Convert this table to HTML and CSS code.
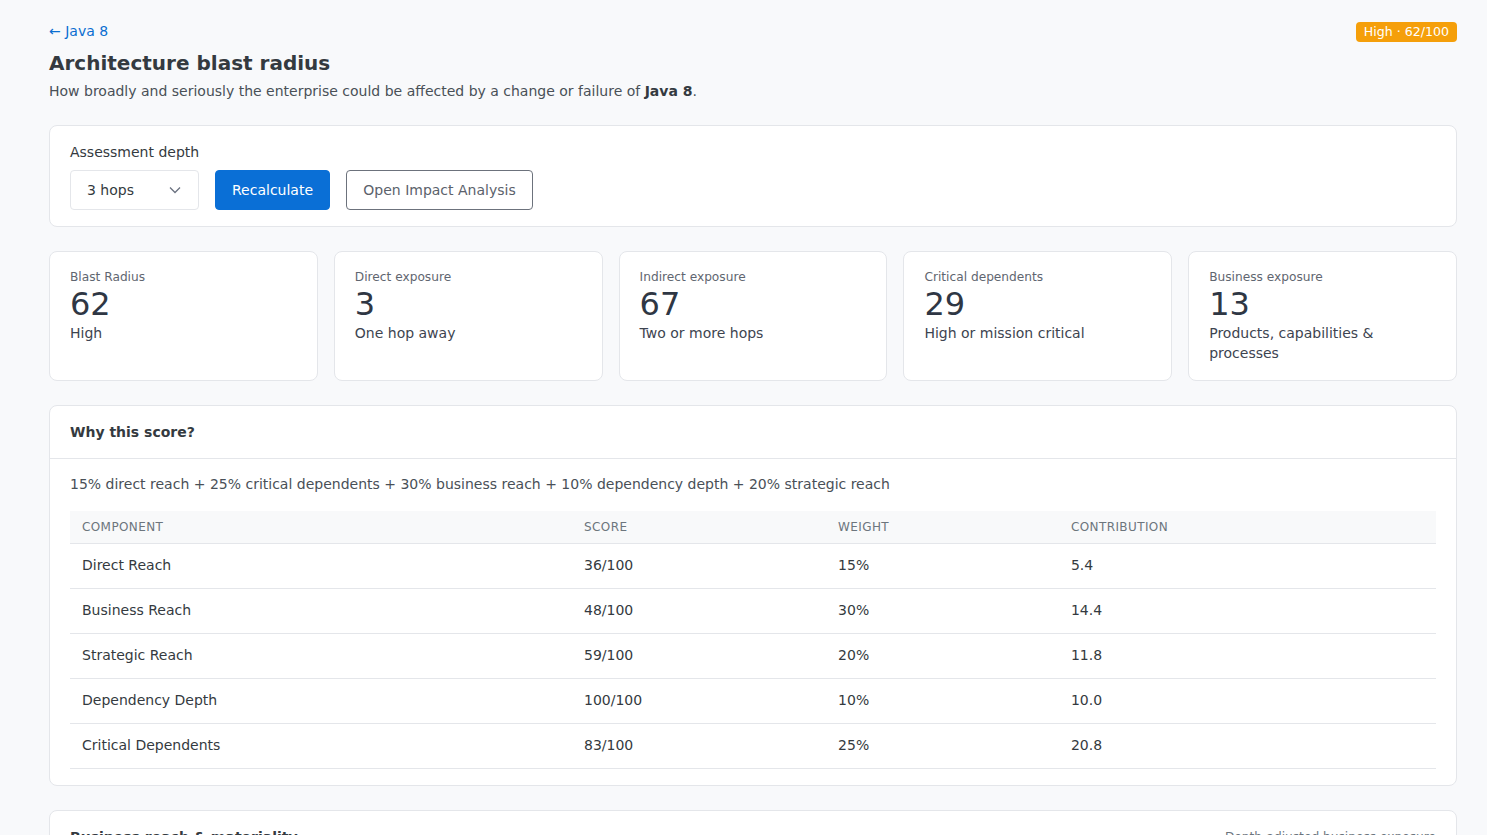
FILE: index.html
```html
<!DOCTYPE html>
<html lang="en">
<head>
<meta charset="utf-8">
<title>Architecture blast radius</title>
<link rel="stylesheet" href="styles.css">
</head>
<body>
<main class="page">
  <div class="topbar">
    <a class="back" href="#">← Java 8</a>
    <span class="badge">High · 62/100</span>
  </div>
  <h1 class="title">Architecture blast radius</h1>
  <p class="subtitle">How broadly and seriously the enterprise could be affected by a change or failure of <strong>Java 8</strong>.</p>

  <section class="card controls">
    <label class="ctl-label">Assessment depth</label>
    <div class="ctl-row">
      <div class="select">
        <span>3 hops</span>
        <svg class="chev" width="12" height="8" viewBox="0 0 12 8"><path d="M1 1.5 L6 6.5 L11 1.5" fill="none" stroke="#6b7280" stroke-width="1.3"/></svg>
      </div>
      <button class="btn btn-primary">Recalculate</button>
      <button class="btn btn-outline">Open Impact Analysis</button>
    </div>
  </section>

  <section class="stats">
    <div class="card stat">
      <div class="stat-label">Blast Radius</div>
      <div class="stat-value">62</div>
      <div class="stat-sub">High</div>
    </div>
    <div class="card stat">
      <div class="stat-label">Direct exposure</div>
      <div class="stat-value">3</div>
      <div class="stat-sub">One hop away</div>
    </div>
    <div class="card stat">
      <div class="stat-label">Indirect exposure</div>
      <div class="stat-value">67</div>
      <div class="stat-sub">Two or more hops</div>
    </div>
    <div class="card stat">
      <div class="stat-label">Critical dependents</div>
      <div class="stat-value">29</div>
      <div class="stat-sub">High or mission critical</div>
    </div>
    <div class="card stat">
      <div class="stat-label">Business exposure</div>
      <div class="stat-value">13</div>
      <div class="stat-sub">Products, capabilities &amp; processes</div>
    </div>
  </section>

  <section class="card panel">
    <header class="panel-head">
      <h2 class="panel-title">Why this score?</h2>
    </header>
    <div class="panel-body">
      <p class="formula">15% direct reach + 25% critical dependents + 30% business reach + 10% dependency depth + 20% strategic reach</p>
      <table class="score-table">
        <colgroup>
          <col class="c1"><col class="c2"><col class="c3"><col class="c4">
        </colgroup>
        <thead>
          <tr><th>Component</th><th>Score</th><th>Weight</th><th>Contribution</th></tr>
        </thead>
        <tbody>
          <tr><td>Direct Reach</td><td>36/100</td><td>15%</td><td>5.4</td></tr>
          <tr><td>Business Reach</td><td>48/100</td><td>30%</td><td>14.4</td></tr>
          <tr><td>Strategic Reach</td><td>59/100</td><td>20%</td><td>11.8</td></tr>
          <tr><td>Dependency Depth</td><td>100/100</td><td>10%</td><td>10.0</td></tr>
          <tr><td>Critical Dependents</td><td>83/100</td><td>25%</td><td>20.8</td></tr>
        </tbody>
      </table>
    </div>
  </section>

  <section class="card panel">
    <header class="panel-head split">
      <h2 class="panel-title">Business reach &amp; materiality</h2>
      <span class="panel-meta">Depth-adjusted business exposure</span>
    </header>
    <div class="panel-body tall"></div>
  </section>
</main>
</body>
</html>
```

FILE: styles.css
```css
* { box-sizing: border-box; }
html, body {
  margin: 0;
  padding: 0;
  background: #f8f9fb;
  font-family: "DejaVu Sans", sans-serif;
  color: #343a40;
}
.page {
  padding: 20px 30px 0 49px;
}
.topbar {
  display: flex;
  justify-content: space-between;
  align-items: center;
  height: 22px;
}
.back {
  color: #0b6fd1;
  text-decoration: none;
  font-size: 14px;
}
.badge {
  background: #f59f0a;
  color: #fff;
  font-size: 12.6px;
  padding: 2px 8px;
  border-radius: 4px;
  line-height: 16px;
  margin-top: 1px;
}
.title {
  font-size: 20px;
  font-weight: bold;
  margin: 8px 0 0;
  line-height: 26px;
  color: #343a40;
}
.subtitle {
  margin: 5px 0 0;
  font-size: 14px;
  line-height: 20px;
  color: #495057;
}
.subtitle strong { color: #343a40; }

.card {
  background: #fff;
  border: 1px solid #e4e6ea;
  border-radius: 8px;
}
.controls {
  margin-top: 24px;
  padding: 17px 20px 16px;
}
.ctl-label {
  display: block;
  font-size: 14px;
  line-height: 18px;
  color: #343a40;
}
.ctl-row {
  display: flex;
  gap: 16px;
  margin-top: 9px;
}
.select {
  width: 129px;
  height: 40px;
  border: 1px solid #e4e6ea;
  border-radius: 4px;
  display: flex;
  align-items: center;
  justify-content: space-between;
  padding: 0 17px 0 16px;
  font-size: 14px;
  color: #343a40;
}
.btn {
  height: 40px;
  font-family: inherit;
  font-size: 14px;
  border-radius: 4px;
  padding: 0 16px;
  cursor: pointer;
}
.btn-primary {
  background: #0a6fd6;
  border: 1px solid #0a6fd6;
  color: #fff;
  width: 115px;
}
.btn-outline {
  background: #fff;
  border: 1px solid #6c727c;
  color: #5b626b;
  width: 187px;
}

.stats {
  margin-top: 24px;
  display: grid;
  grid-template-columns: repeat(5, 1fr);
  gap: 16px;
}
.stat {
  height: 130px;
  padding: 17px 20px;
}
.stat-label {
  font-size: 12.2px;
  line-height: 16px;
  color: #5f6670;
}
.stat-value {
  font-size: 32px;
  line-height: 38px;
  color: #2f3744;
}
.stat-sub {
  font-size: 14px;
  line-height: 20px;
  color: #3d4450;
}

.panel {
  margin-top: 24px;
}
.panel-head {
  height: 53px;
  padding: 0 20px;
  display: flex;
  align-items: center;
  border-bottom: 1px solid #e4e6ea;
}
.panel-head.split { justify-content: space-between; }
.panel-title {
  margin: 0;
  font-size: 14px;
  font-weight: bold;
  color: #343a40;
}
.panel-meta {
  font-size: 12.2px;
  color: #6c757d;
}
.panel-body {
  padding: 15px 20px 16px;
}
.panel-body.tall { height: 200px; }
.formula {
  margin: 0;
  font-size: 14px;
  line-height: 20px;
  color: #495057;
}
.score-table {
  margin-top: 17px;
  width: 100%;
  border-collapse: collapse;
  font-size: 14px;
}
.c1 { width: 36.75%; }
.c2 { width: 18.6%; }
.c3 { width: 17.05%; }
.score-table th {
  background: #f8f9fa;
  text-align: left;
  font-weight: normal;
  text-transform: uppercase;
  font-size: 12px;
  letter-spacing: 0.4px;
  color: #6c757d;
  height: 32px;
  padding: 0 12px;
  border-bottom: 1px solid #e4e6ea;
}
.score-table td {
  height: 45px;
  padding: 0 12px 1px;
  border-bottom: 1px solid #e4e6ea;
  color: #343a40;
}
```
